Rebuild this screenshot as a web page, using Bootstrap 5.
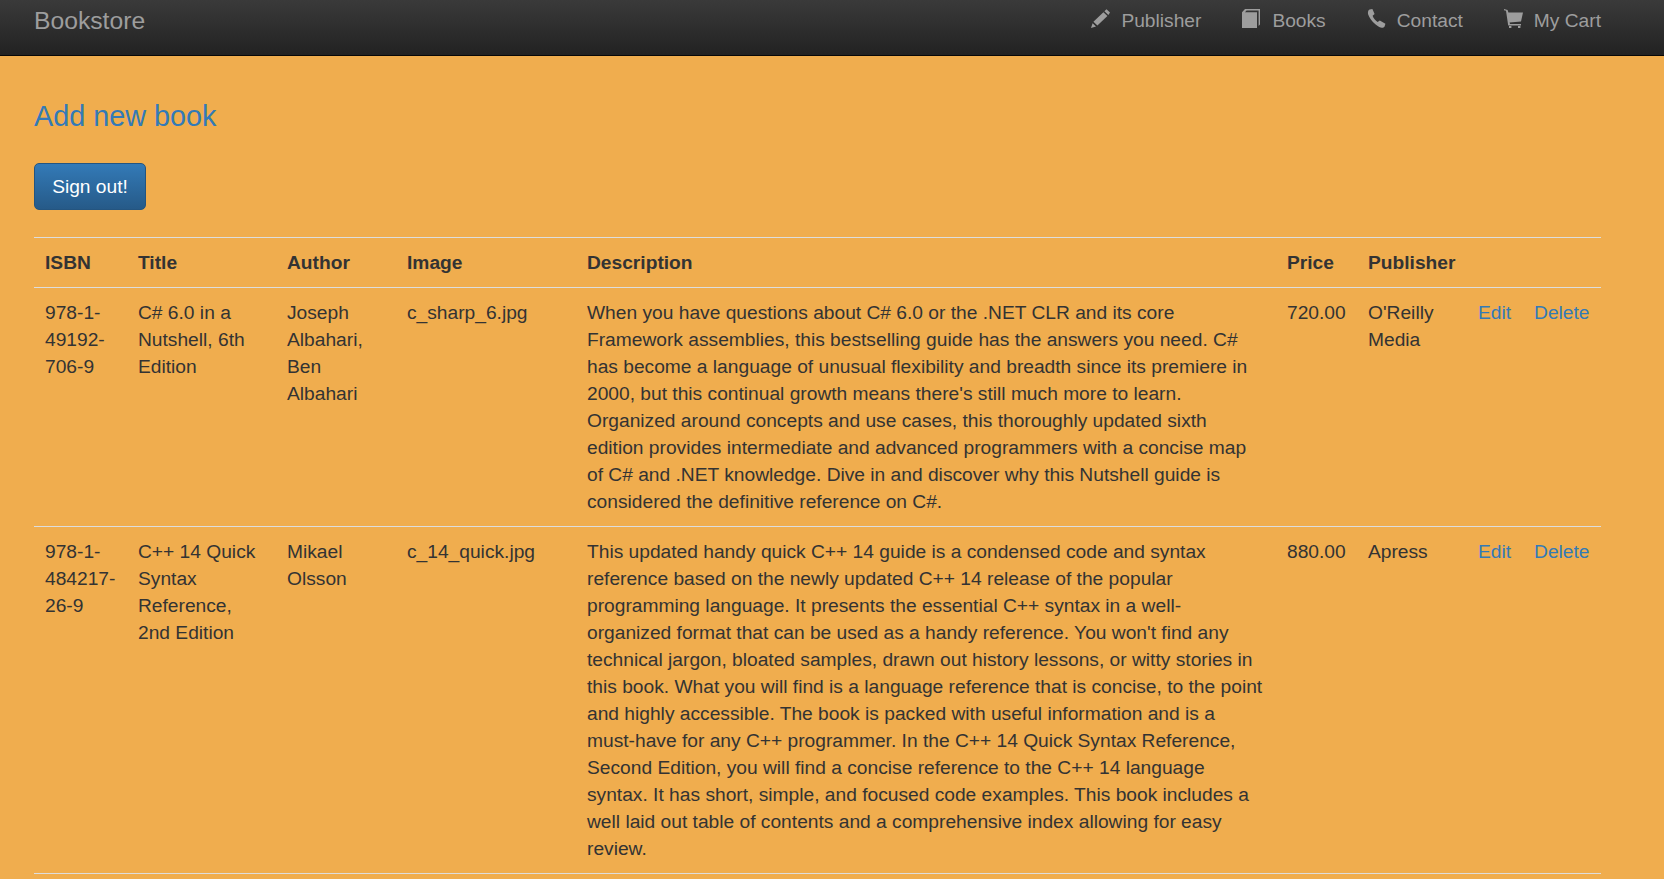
<!DOCTYPE html>
<html lang="en">
<head>
  <meta charset="utf-8" />
  <title>Bookstore</title>
  <link href="https://cdn.jsdelivr.net/npm/bootstrap@5.3.0/dist/css/bootstrap.min.css" rel="stylesheet">
  <script src="https://cdn.jsdelivr.net/npm/bootstrap@5.3.0/dist/js/bootstrap.bundle.min.js"></script>

  <style>
    html, body {
      height: 879px;
      overflow: hidden;
    }

    body {
      background: #f0ad4e;
      color: #333;
      font-family: "Liberation Sans", Arial, sans-serif;
      font-size: 19.2px;
      line-height: 27px;
    }

    a {
      color: #337ab7;
      text-decoration: none;
    }

    .top-bar {
      height: 56px;
      padding: 0 63px 0 34px;
      background: linear-gradient(to bottom, #3a3a3a, #222);
      border-bottom: 1px solid #080808;
    }

    .top-brand {
      color: #9d9d9d;
      font-size: 24.7px;
      line-height: 41px;
    }

    .top-links {
      gap: 41px;
      padding-top: 7px;
    }

    .top-links a {
      color: #9d9d9d;
      line-height: 27px;
    }

    .top-links svg {
      width: 19px;
      height: 19px;
      margin-right: 11px;
      fill: #9d9d9d;
      vertical-align: -1px;
    }

    .page-body {
      padding: 0 63px 0 34px;
    }

    .page-title {
      margin: 42px 0 29px;
      font-size: 28.8px;
      line-height: 36px;
      font-weight: 400;
    }

    .sign-out {
      width: 112px;
      height: 47px;
      padding: 1px 0 0;
      margin-bottom: 27px;
      color: #fff;
      font-size: 19.2px;
      background: linear-gradient(to bottom, #337ab7, #265a88);
      border: 1px solid #245580;
      border-radius: 5px;
    }

    .book-table {
      width: 1567px;
      table-layout: fixed;
      border-collapse: collapse;
    }

    .book-table th, .book-table td {
      padding: 11px;
      vertical-align: top;
      border-top: 1px solid #ddd;
    }

    .book-table th {
      font-weight: 700;
    }

    .book-table tbody tr:last-child td {
      border-bottom: 1px solid #ddd;
    }

    .w-isbn { width: 93px; }
    .w-title { width: 149px; }
    .w-author { width: 120px; }
    .w-image { width: 180px; }
    .w-desc { width: 700px; }
    .w-price { width: 81px; }
    .w-pub { width: 110px; }
    .w-act { width: 134px; }

    .row-actions {
      gap: 23px;
    }
  </style>
</head>
<body>
  <nav class="top-bar d-flex justify-content-between align-items-start">
    <span class="top-brand">Bookstore</span>
    <div class="top-links d-flex">
      <a href="#"><svg viewBox="0 0 19 19"><path d="M15.5 0.3 19 3.6 17.4 6 13.4 2.2ZM12.4 3.3 16.4 7 6.4 16.6 2.4 12.8ZM1.6 14.2 5 17.5 0 19Z"/></svg>Publisher</a>
      <a href="#"><svg viewBox="0 0 19 19"><path d="M0 3.2 3 0H18V15.5L16.6 17V1.6H4.6L3 3.2H15V19H0Z"/></svg>Books</a>
      <a href="#"><svg viewBox="0 0 19 19"><path d="M2.6 0.6 5.4 0 7.6 5 5.6 6.8C6.2 9 8.6 12 10.6 13L12.8 11.6 18.4 14.8 17.6 17.4C16.6 19 14.4 19.2 12.2 18 7.4 15.4 2.8 10.4 1.2 5.6 0.6 3.4 1 1.6 2.6 0.6Z"/></svg>Contact</a>
      <a href="#"><svg viewBox="0 0 19 19"><path d="M0 0 3.6 1 4.4 3.4H19L17 12.6 5.6 13.6 6 15H17V16.4H4.2L2 1.8 0 1.2ZM5 17H7.4V19H5ZM14 17H16.4V19H14Z"/></svg>My Cart</a>
    </div>
  </nav>

  <main class="page-body">
    <h2 class="page-title"><a href="#">Add new book</a></h2>
    <button type="button" class="btn sign-out d-block">Sign out!</button>

    <table class="book-table">
      <colgroup>
        <col class="w-isbn"><col class="w-title"><col class="w-author"><col class="w-image">
        <col class="w-desc"><col class="w-price"><col class="w-pub"><col class="w-act">
      </colgroup>
      <thead>
        <tr>
          <th>ISBN</th>
          <th>Title</th>
          <th>Author</th>
          <th>Image</th>
          <th>Description</th>
          <th>Price</th>
          <th>Publisher</th>
          <th></th>
        </tr>
      </thead>
      <tbody>
        <tr>
          <td>978-1-49192-706-9</td>
          <td>C# 6.0 in a Nutshell, 6th Edition</td>
          <td>Joseph Albahari, Ben Albahari</td>
          <td>c_sharp_6.jpg</td>
          <td>When you have questions about C# 6.0 or the .NET CLR and its core Framework assemblies, this bestselling guide has the answers you need. C# has become a language of unusual flexibility and breadth since its premiere in 2000, but this continual growth means there's still much more to learn. Organized around concepts and use cases, this thoroughly updated sixth edition provides intermediate and advanced programmers with a concise map of C# and .NET knowledge. Dive in and discover why this Nutshell guide is considered the definitive reference on C#.</td>
          <td>720.00</td>
          <td>O'Reilly Media</td>
          <td><div class="row-actions d-flex"><a href="#">Edit</a><a href="#">Delete</a></div></td>
        </tr>
        <tr>
          <td>978-1-484217-26-9</td>
          <td>C++ 14 Quick Syntax Reference, 2nd Edition</td>
          <td>Mikael Olsson</td>
          <td>c_14_quick.jpg</td>
          <td>This updated handy quick C++ 14 guide is a condensed code and syntax reference based on the newly updated C++ 14 release of the popular programming language. It presents the essential C++ syntax in a well-organized format that can be used as a handy reference. You won't find any technical jargon, bloated samples, drawn out history lessons, or witty stories in this book. What you will find is a language reference that is concise, to the point and highly accessible. The book is packed with useful information and is a must-have for any C++ programmer. In the C++ 14 Quick Syntax Reference, Second Edition, you will find a concise reference to the C++ 14 language syntax. It has short, simple, and focused code examples. This book includes a well laid out table of contents and a comprehensive index allowing for easy review.</td>
          <td>880.00</td>
          <td>Apress</td>
          <td><div class="row-actions d-flex"><a href="#">Edit</a><a href="#">Delete</a></div></td>
        </tr>
      </tbody>
    </table>
  </main>
</body>
</html>
